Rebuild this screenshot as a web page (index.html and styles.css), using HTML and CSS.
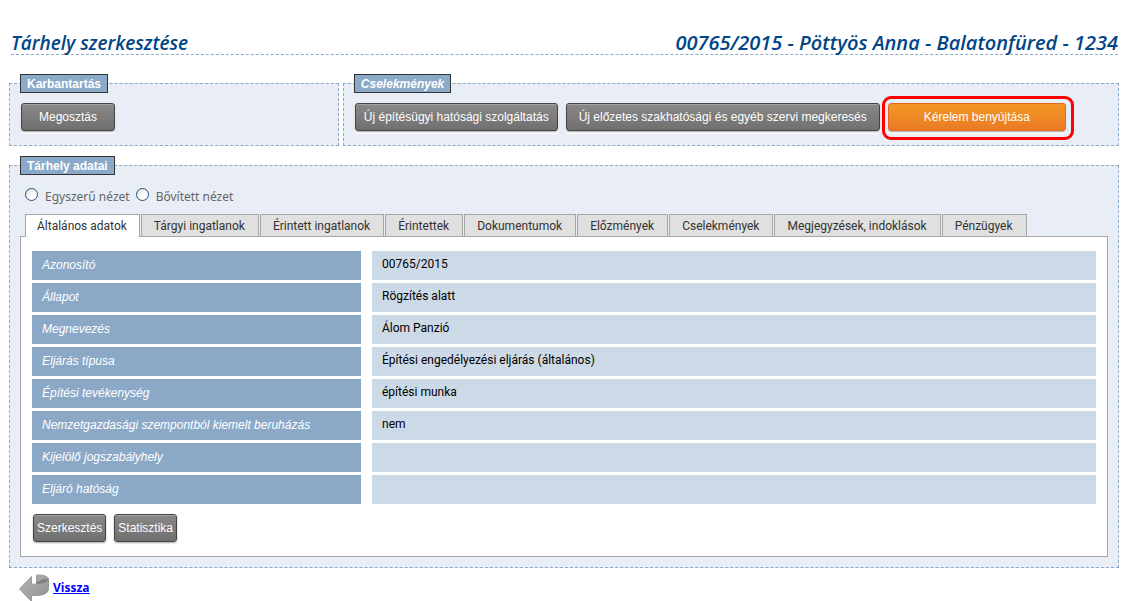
FILE: index.html
```html
<!DOCTYPE html>
<html lang="hu">
<head>
<meta charset="utf-8">
<title>Tárhely szerkesztése</title>
<link rel="stylesheet" href="styles.css">
</head>
<body>
<header class="page-header">
  <h1 class="page-title">Tárhely szerkesztése</h1>
  <p class="page-title page-subject">00765/2015 - Pöttyös Anna - Balatonfüred - 1234</p>
</header>
<main>
  <div class="toolbars">
    <fieldset class="box">
      <legend class="box-legend">Karbantartás</legend>
      <div class="actions"><button class="btn btn-medium" type="button">Megosztás</button></div>
    </fieldset>
    <fieldset class="box">
      <legend class="box-legend box-legend-italic">Cselekmények</legend>
      <div class="actions">
        <button class="btn" type="button">Új építésügyi hatósági szolgáltatás</button>
        <button class="btn btn-roomy" type="button">Új előzetes szakhatósági és egyéb szervi megkeresés</button>
        <span class="highlighted"><button class="btn btn-primary" type="button">Kérelem benyújtása</button></span>
      </div>
    </fieldset>
  </div>
  <fieldset class="box box-data">
    <legend class="box-legend">Tárhely adatai</legend>
    <div class="views">
      <label class="view"><input class="radio" type="radio" name="view">Egyszerű nézet</label>
      <label class="view"><input class="radio" type="radio" name="view">Bővített nézet</label>
    </div>
    <div class="tabs" role="tablist">
      <button class="tab tab-active" type="button" role="tab" aria-selected="true">Általános adatok</button>
      <button class="tab" type="button" role="tab">Tárgyi ingatlanok</button>
      <button class="tab" type="button" role="tab">Érintett ingatlanok</button>
      <button class="tab" type="button" role="tab">Érintettek</button>
      <button class="tab" type="button" role="tab">Dokumentumok</button>
      <button class="tab" type="button" role="tab">Előzmények</button>
      <button class="tab" type="button" role="tab">Cselekmények</button>
      <button class="tab" type="button" role="tab">Megjegyzések, indoklások</button>
      <button class="tab" type="button" role="tab">Pénzügyek</button>
    </div>
    <div class="panel" role="tabpanel">
      <table class="details">
        <tr><th scope="row">Azonosító</th><td>00765/2015</td></tr>
        <tr><th scope="row">Állapot</th><td>Rögzítés alatt</td></tr>
        <tr><th scope="row">Megnevezés</th><td>Álom Panzió</td></tr>
        <tr><th scope="row">Eljárás típusa</th><td>Építési engedélyezési eljárás (általános)</td></tr>
        <tr><th scope="row">Építési tevékenység</th><td>építési munka</td></tr>
        <tr><th scope="row">Nemzetgazdasági szempontból kiemelt beruházás</th><td>nem</td></tr>
        <tr><th scope="row">Kijelölő jogszabályhely</th><td></td></tr>
        <tr><th scope="row">Eljáró hatóság</th><td></td></tr>
      </table>
      <div class="actions panel-actions">
        <button class="btn btn-tight" type="button">Szerkesztés</button>
        <button class="btn btn-tight" type="button">Statisztika</button>
      </div>
    </div>
  </fieldset>
</main>
<footer class="footer">
  <a class="back" href="#">
    <svg class="back-icon" width="31" height="28" viewBox="0 0 31 28" aria-hidden="true">
      <defs>
        <linearGradient id="arrow" x1="0" y1="0" x2="1" y2="1">
          <stop offset="0" stop-color="#b4b4b4"/><stop offset="1" stop-color="#929292"/>
        </linearGradient>
      </defs>
      <path d="M17 1C24 0 30 2 30 6C30 9 24 11 17 10Z" fill="#808080"/>
      <path d="M17 1C22 0 28 1 29.500 5C25 4 21 6 17.500 9Z" fill="#a6a6a6"/>
      <path d="M.5 15L12.500 2.500V10C21 11 29 9 29.500 5.500V15C29 20 23 22 12.500 21.500V27.500Z" fill="url(#arrow)" stroke="#999"/>
    </svg>
    <span class="back-label">Vissza</span>
  </a>
</footer>
</body>
</html>
```
FILE: styles.css
```css
* { box-sizing: border-box; }

body {
  margin: 0;
  padding: 32px 8px 0 9px;
  background: #fff;
  color: #000;
  font: 12px/16px "Noto Sans", sans-serif;
}

.page-header {
  display: flex;
  justify-content: space-between;
  margin: 0 1px 19px 2px;
  border-bottom: 1px dashed #8caac8;
}

.page-title {
  margin: 0;
  color: #004586;
  font: italic 600 19px/22px "Open Sans", sans-serif;
}

.page-subject { font-size: 20px; }

.toolbars {
  display: grid;
  grid-template-columns: 17fr 40fr;
  gap: 4px;
  margin-bottom: 10px;
}

.box {
  min-width: 0;
  margin: 0;
  padding: 10px 10px 14px;
  border: 1px dashed #8caac8;
  background: #e8edf6;
}

.box-data { padding-bottom: 10px; }

.box-legend {
  padding: 1px 6px 0;
  border: 1px solid #333;
  background: #8ba9c8;
  color: #fff;
  font: bold 12px/16px "Liberation Sans", sans-serif;
}

.box-legend-italic { font-style: italic; }

.actions {
  display: flex;
  gap: 8px;
  padding-left: 1px;
}

.btn {
  height: 28px;
  padding: 0 8px;
  border: 1px solid #444;
  border-radius: 3px;
  background: linear-gradient(#888, #707070);
  box-shadow: 0 1px 2px #aaa, 0 2px 0 1px #fff, inset 0 1px #a4a4a4;
  color: #fff;
  font: 12px/16px "Liberation Sans", sans-serif;
  white-space: nowrap;
}

.btn-medium { padding: 0 17px; }
.btn-roomy { padding: 0 12px; }
.btn-tight { padding: 0 3px; }

.btn-primary {
  padding: 0 35px;
  border-color: #dc6a20;
  background: linear-gradient(#f29726, #ea7b24);
  box-shadow: 0 1px 2px #aaa, 0 2px 0 1px #fff;
}

.highlighted { position: relative; }

.highlighted::after {
  content: "";
  position: absolute;
  inset: -7px -8px -9px -6px;
  border: 3px solid #f00;
  border-radius: 9px;
  pointer-events: none;
}

.views {
  display: flex;
  gap: 6px;
  padding: 3px 0 9px 5px;
}

.view {
  display: flex;
  gap: 7px;
  color: #666;
  line-height: 17px;
}

.radio {
  appearance: none;
  width: 13px;
  height: 13px;
  margin: 0;
  border: 1px solid #23507f;
  border-radius: 50%;
  background: linear-gradient(135deg, #dcdcd5, #fff 60%);
}

.tabs {
  display: flex;
  gap: 1px;
  padding-left: 5px;
}

.tab {
  height: 22px;
  padding: 0 13px 0 12px;
  border: 1px solid #a6a6a6;
  border-bottom: 0;
  background: #e0e0e0;
  color: #333;
  font: 12px/16px Roboto, sans-serif;
  white-space: nowrap;
}

.tab-active {
  height: 23px;
  margin-bottom: -1px;
  padding: 0 12px 0 11px;
  background: #fff;
  z-index: 1;
}

.panel {
  padding: 11px 0 14px;
  border: 1px solid #a6a6a6;
  background: #fff;
}

.details {
  width: 100%;
  border-spacing: 11px 3px;
  table-layout: fixed;
}

.details th,
.details td {
  height: 29px;
  padding: 0 10px 2px;
  text-align: left;
}

.details th {
  width: 329px;
  background: #8ba9c7;
  color: #fff;
  font: italic 12px/16px "Liberation Sans", sans-serif;
}

.details td {
  padding-bottom: 4px;
  background: #ccd9e6;
  font: 12px/16px Roboto, sans-serif;
}

.panel-actions { padding: 7px 0 0 12px; }

.footer { padding: 6px 0 0 10px; }

.back {
  display: inline-flex;
  gap: 3px;
  color: #00f;
  font-weight: bold;
}

.back-label { padding-top: 6px; text-decoration: underline; }
```
